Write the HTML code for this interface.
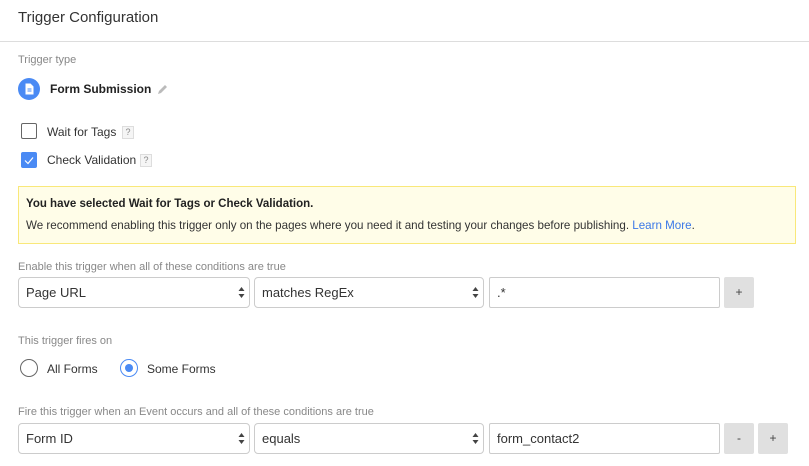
<!DOCTYPE html>
<html><head><style>
*{box-sizing:border-box;margin:0;padding:0}
body{width:809px;height:466px;background:#fff;font-family:"Liberation Sans",sans-serif;color:#333;position:relative;overflow:hidden}
.a{position:absolute;white-space:nowrap}
.lbl{font-size:11px;color:#888}
.t{font-size:12px;color:#333}
.sel{position:absolute;height:31px;border:1px solid #ccc;border-radius:4px;font-size:13px;color:#333;padding-left:7px;line-height:29px;background:#fff}
.sel .ar{position:absolute;right:4px;top:8px;width:7px}
.btn{position:absolute;height:31px;width:30px;background:#e0e0e0;border-radius:2px;font-size:12px;text-align:center;line-height:31px;color:#444}
.q{position:absolute;width:12px;height:13px;border:1px solid #ddd;background:#f5f5f5;font-size:9px;color:#888;text-align:center;line-height:11px}
</style></head><body>
<div class="a" style="left:18px;top:9px;font-size:15px;color:#333">Trigger Configuration</div>
<div class="a" style="left:0;top:41px;width:809px;height:1px;background:#ddd"></div>
<div class="a lbl" style="left:18px;top:54px">Trigger type</div>
<div class="a" style="left:18px;top:78px;width:22px;height:22px;border-radius:50%;background:#4a8af4"></div>
<svg class="a" style="left:24px;top:83px" width="11" height="12" viewBox="0 0 11 12"><path d="M1.5 0.5h5l3 3v8h-8z" fill="#fff"/><path d="M3.5 6h4M3.5 8h4" stroke="#4a8af4" stroke-width="1"/></svg>
<div class="a" style="left:50px;top:82px;font-size:12px;font-weight:bold;color:#222">Form Submission</div>
<svg class="a" style="left:156px;top:83px" width="13" height="13" viewBox="0 0 13 13"><path d="M2 11l1-3 6-6 2 2-6 6z" fill="#bbb"/></svg>
<div class="a" style="left:21px;top:123px;width:16px;height:16px;border:1.5px solid #666;border-radius:2px"></div>
<div class="a t" style="left:47px;top:125px">Wait for Tags</div>
<div class="q" style="left:122px;top:126px">?</div>
<div class="a" style="left:21px;top:152px;width:16px;height:16px;background:#4a8af4;border-radius:2px"></div>
<svg class="a" style="left:21px;top:152px" width="16" height="16"><path d="M4 8.5l3 3 5-6" stroke="#fff" stroke-width="1.2" fill="none"/></svg>
<div class="a t" style="left:47px;top:153px">Check Validation</div>
<div class="q" style="left:140px;top:154px">?</div>
<div class="a" style="left:18px;top:186px;width:778px;height:58px;background:#fffde8;border:1px solid #f9e87a"></div>
<div class="a" style="left:26px;top:198px;font-size:11.5px;font-weight:bold;color:#222">You have selected Wait for Tags or Check Validation.</div>
<div class="a" style="left:26px;top:219px;font-size:11.6px;color:#333">We recommend enabling this trigger only on the pages where you need it and testing your changes before publishing. <span style="color:#3b78e7">Learn More</span>.</div>
<div class="a lbl" style="left:18px;top:261px">Enable this trigger when all of these conditions are true</div>
<div class="sel" style="left:18px;top:277px;width:232px">Page URL<svg class="ar" height="13" viewBox="0 0 7 13"><path d="M3.5 1L6.5 5H0.5zM3.5 12L6.5 8H0.5z" fill="#444"/></svg></div>
<div class="sel" style="left:254px;top:277px;width:230px">matches RegEx<svg class="ar" height="13" viewBox="0 0 7 13"><path d="M3.5 1L6.5 5H0.5zM3.5 12L6.5 8H0.5z" fill="#444"/></svg></div>
<div class="sel" style="left:489px;top:277px;width:231px;border-radius:2px">.*</div>
<div class="btn" style="left:724px;top:277px">+</div>
<div class="a lbl" style="left:18px;top:335px">This trigger fires on</div>
<div class="a" style="left:20px;top:359px;width:18px;height:18px;border-radius:50%;border:1.5px solid #666"></div>
<div class="a t" style="left:47px;top:362px">All Forms</div>
<div class="a" style="left:120px;top:359px;width:18px;height:18px;border-radius:50%;border:1.5px solid #4a8af4"></div>
<div class="a" style="left:125px;top:364px;width:8px;height:8px;border-radius:50%;background:#4a8af4"></div>
<div class="a t" style="left:147px;top:362px">Some Forms</div>
<div class="a lbl" style="left:18px;top:406px">Fire this trigger when an Event occurs and all of these conditions are true</div>
<div class="sel" style="left:18px;top:423px;width:232px">Form ID<svg class="ar" height="13" viewBox="0 0 7 13"><path d="M3.5 1L6.5 5H0.5zM3.5 12L6.5 8H0.5z" fill="#444"/></svg></div>
<div class="sel" style="left:254px;top:423px;width:230px">equals<svg class="ar" height="13" viewBox="0 0 7 13"><path d="M3.5 1L6.5 5H0.5zM3.5 12L6.5 8H0.5z" fill="#444"/></svg></div>
<div class="sel" style="left:489px;top:423px;width:231px;border-radius:2px">form_contact2</div>
<div class="btn" style="left:724px;top:423px">-</div>
<div class="btn" style="left:758px;top:423px">+</div>
</body></html>
